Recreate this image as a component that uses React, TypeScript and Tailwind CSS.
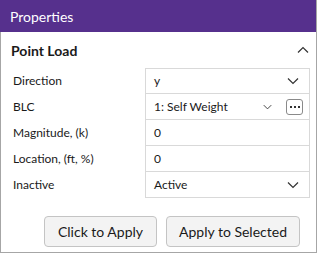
import React from 'react';

const font = { fontFamily: 'Lato, "Noto Sans", sans-serif' };

const ChevronDown = ({ className = '' }: { className?: string }) => (
  <svg viewBox="0 0 12 8" className={className} fill="none" stroke="#333" strokeWidth="1.2">
    <path d="M1 1.5 L6 6.5 L11 1.5" />
  </svg>
);

const ChevronUp = () => (
  <svg viewBox="0 0 12 8" className="w-[12px] h-[8px]" fill="none" stroke="#333" strokeWidth="1.2">
    <path d="M1 6.5 L6 1.5 L11 6.5" />
  </svg>
);

interface Row {
  label: string;
  value: string;
  kind: 'select' | 'text' | 'blc';
}

const rows: Row[] = [
  { label: 'Direction', value: 'y', kind: 'select' },
  { label: 'BLC', value: '1: Self Weight', kind: 'blc' },
  { label: 'Magnitude, (k)', value: '0', kind: 'text' },
  { label: 'Location, (ft, %)', value: '0', kind: 'text' },
  { label: 'Inactive', value: 'Active', kind: 'select' },
];

export default function App() {
  return (
    <div className="w-[318px] h-[254px] bg-white flex flex-col text-[#1a1a1a]" style={font}>
      <div className="h-[32px] bg-[#56308d] text-white text-[14px] flex items-center pl-[10px] mr-[1px] border-r border-[#a6a6a6]">
        Properties
      </div>
      <div className="flex-1 flex flex-col border-l border-r border-b border-[#a6a6a6] mr-[1px] mb-[1px]">
        <div className="h-[36px] flex items-center justify-between pl-[10px] pr-[7px]">
          <span className="text-[14px] font-bold">Point Load</span>
          <ChevronUp />
        </div>
        <div className="flex flex-col pr-[6px]">
          {rows.map((r, i) => (
            <div key={r.label} className="flex h-[26px]">
              <div className="w-[144px] flex items-center pl-[12px] text-[12px]">{r.label}</div>
              <div
                className={`flex-1 flex items-center border-l border-r border-b border-[#d9d9d9] text-[12px] ${
                  i === 0 ? 'border-t' : ''
                }`}
              >
                <span className="pl-[8px] flex-1">{r.value}</span>
                {r.kind === 'select' && <ChevronDown className="w-[12px] h-[8px] mr-[10px]" />}
                {r.kind === 'blc' && (
                  <>
                    <ChevronDown className="w-[9px] h-[6px] mr-[14px]" />
                    <div className="w-[17px] h-[16px] border border-[#8a8a8a] rounded-[3px] flex items-center justify-center gap-[2px] mr-[6px]">
                      <span className="w-[2px] h-[2px] bg-[#333]" />
                      <span className="w-[2px] h-[2px] bg-[#333]" />
                      <span className="w-[2px] h-[2px] bg-[#333]" />
                    </div>
                  </>
                )}
              </div>
            </div>
          ))}
        </div>
        <div className="flex justify-end gap-[9px] pr-[16px] mt-[18px]">
          <button className="w-[113px] h-[31px] bg-[#f3f3f3] border border-[#c4c4c4] rounded-[4px] text-[14px]">
            Click to Apply
          </button>
          <button className="w-[134px] h-[31px] bg-[#f3f3f3] border border-[#c4c4c4] rounded-[4px] text-[14px]">
            Apply to Selected
          </button>
        </div>
      </div>
    </div>
  );
}
